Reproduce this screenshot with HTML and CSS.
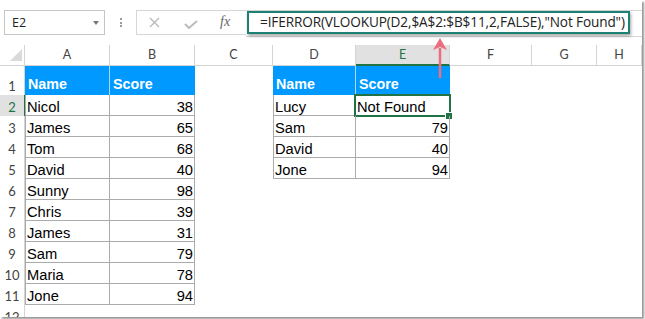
FILE: index.html
```html
<!DOCTYPE html>
<html>
<head>
<meta charset="utf-8">
<link rel="stylesheet" href="styles.css">
</head>
<body>
<div class="frame">
  <div class="fbar">
    <div class="namebox"><span>E2</span><span class="caret"></span></div>
    <div class="grip"><i></i><i></i><i></i></div>
    <div class="btns">
      <svg class="ic-x" width="11" height="11" viewBox="0 0 11 11"><path d="M1 1 L10 10 M10 1 L1 10" stroke="#b9b9b9" stroke-width="1.4" fill="none"/></svg>
      <svg class="ic-ok" width="14" height="9" viewBox="0 0 14 9"><path d="M1 4 L5 8 L13 1" stroke="#bcbcbc" stroke-width="2" fill="none"/></svg>
      <span class="fx">fx</span>
    </div>
    <div class="formula">
      <div class="finput">=IFERROR(VLOOKUP(D2,$A$2:$B$11,2,FALSE),"Not Found")</div>
    </div>
  </div>

  <div class="sheet">
    <div class="corner"><svg width="24" height="20" viewBox="0 0 24 20"><polygon points="10,16 22,16 22,4" fill="#dadada"/></svg></div>
    <div class="colh">A</div><div class="colh">B</div><div class="colh">C</div><div class="colh">D</div><div class="colh sel">E</div><div class="colh">F</div><div class="colh">G</div><div class="colh">H</div>

    <div class="rowh">1</div><div class="th sep">Name</div><div class="th">Score</div><div></div><div class="th sep">Name</div><div class="th">Score</div><div></div><div></div><div></div>

    <div class="rowh sel">2</div><div class="td first">Nicol</div><div class="td num">38</div><div></div><div class="td first">Lucy</div><div class="td active">Not Found<span class="selbox"></span><span class="handle"></span></div><div></div><div></div><div></div>

    <div class="rowh">3</div><div class="td first">James</div><div class="td num">65</div><div></div><div class="td first">Sam</div><div class="td num">79</div><div></div><div></div><div></div>

    <div class="rowh">4</div><div class="td first">Tom</div><div class="td num">68</div><div></div><div class="td first">David</div><div class="td num">40</div><div></div><div></div><div></div>

    <div class="rowh">5</div><div class="td first">David</div><div class="td num">40</div><div></div><div class="td first">Jone</div><div class="td num">94</div><div></div><div></div><div></div>

    <div class="rowh">6</div><div class="td first">Sunny</div><div class="td num">98</div><div></div><div></div><div></div><div></div><div></div><div></div>

    <div class="rowh">7</div><div class="td first">Chris</div><div class="td num">39</div><div></div><div></div><div></div><div></div><div></div><div></div>

    <div class="rowh">8</div><div class="td first">James</div><div class="td num">31</div><div></div><div></div><div></div><div></div><div></div><div></div>

    <div class="rowh">9</div><div class="td first">Sam</div><div class="td num">79</div><div></div><div></div><div></div><div></div><div></div><div></div>

    <div class="rowh">10</div><div class="td first">Maria</div><div class="td num">78</div><div></div><div></div><div></div><div></div><div></div><div></div>

    <div class="rowh">11</div><div class="td first">Jone</div><div class="td num">94</div><div></div><div></div><div></div><div></div><div></div><div></div>

    <div class="rowh">12</div><div></div><div></div><div></div><div></div><div></div><div></div><div></div><div></div>
  </div>

  <svg class="arrow" width="20" height="46" viewBox="0 0 20 46">
    <path d="M10 12 L10 42" stroke="#ea6f80" stroke-width="2.6" fill="none"/>
    <path d="M10 2 L17 14 L10 11 L3 14 Z" fill="#ea6f80"/>
  </svg>
</div>
</body>
</html>
```

FILE: styles.css
```css
* { box-sizing: border-box; margin: 0; padding: 0; }

body {
  width: 645px;
  height: 319px;
  background: #fff;
  overflow: hidden;
}

.frame {
  position: relative;
  width: 642px;
  height: 317px;
  overflow: hidden;
  background: #fff;
  box-shadow: 2px 2px 2px rgba(0, 0, 0, 0.42);
}

/* ---------- formula bar ---------- */
.fbar {
  display: flex;
  align-items: flex-start;
  height: 45px;
  padding-top: 10px;
}

.namebox {
  margin-left: 4px;
  width: 101px;
  height: 25px;
  border: 1px solid #c6c6c6;
  display: flex;
  align-items: center;
  justify-content: space-between;
  padding: 0 5px 1px 7px;
  font: 12.5px "Open Sans", sans-serif;
  color: #222;
}

.caret {
  width: 0;
  height: 0;
  border-left: 3.5px solid transparent;
  border-right: 3.5px solid transparent;
  border-top: 4px solid #777;
  margin-top: 1px;
}

.grip {
  margin: 8px 0 0 15px;
  display: flex;
  flex-direction: column;
  gap: 1.5px;
}
.grip i {
  display: block;
  width: 2px;
  height: 2px;
  background: #9c9c9c;
}

.btns {
  margin-left: 14px;
  width: 110px;
  height: 25px;
  border: 1px solid #d6d6d6;
  border-right: none;
  display: flex;
  align-items: center;
  padding-left: 12px;
}
.ic-ok { margin-left: 24px; margin-top: 3px; }
.fx {
  margin-left: 22px;
  font: italic 14px "Liberation Serif", serif;
  color: #666;
  margin-top: -1px;
}

.formula {
  flex: 1;
  height: 27px;
  border-top: 1px solid #d6d6d6;
  border-bottom: 1px solid #d6d6d6;
  padding-left: 1px;
}

.finput {
  width: 383px;
  height: 23px;
  border: 2px solid #1d8075;
  box-shadow: 1px 2px 3px rgba(0, 0, 0, 0.35);
  padding-left: 11px;
  font: 13.6px "Open Sans", sans-serif;
  letter-spacing: -0.12px;
  line-height: 18px;
  color: #222;
  white-space: nowrap;
  background: #fff;
}

/* ---------- sheet ---------- */
.sheet {
  display: grid;
  grid-template-columns: 25px 85px 85px 78px 83px 94px 82px 65px 45px;
  grid-template-rows: 21px 29px repeat(11, 21px);
  font-family: "Liberation Sans", Arial, sans-serif;
  font-size: 14.7px;
}

.corner {
  border-right: 1px solid #d4d4d4;
  border-bottom: 1px solid #d4d4d4;
}
.corner svg { display: block; }

.colh {
  border-right: 1px solid #d4d4d4;
  border-bottom: 1px solid #d4d4d4;
  text-align: center;
  font: 12.5px Lato, sans-serif;
  line-height: 20px;
  color: #444;
}
.colh.sel {
  background: #e1e1e1;
  color: #217346;
  border-bottom: 2px solid #217346;
}

.rowh {
  border-right: 1px solid #d4d4d4;
  display: flex;
  align-items: flex-end;
  justify-content: center;
  font: 13px Lato, sans-serif;
  line-height: 17px;
  color: #444;
}
.rowh.sel {
  background: #e1e1e1;
  color: #217346;
  border-right: 1px solid #217346;
}

.th {
  background: #0099ff;
  color: #fff;
  font-weight: bold;
  font-size: 14.3px;
  display: flex;
  align-items: flex-end;
  padding: 0 0 2px 3px;
  line-height: 17px;
}
.th.sep { border-right: 1px solid rgba(255, 255, 255, 0.65); }

.td {
  position: relative;
  border-right: 1px solid #ababab;
  border-bottom: 1px solid #ababab;
  display: flex;
  align-items: flex-end;
  padding: 0 1px;
  line-height: 16px;
  color: #000;
  white-space: nowrap;
}
.td.first { border-left: 1px solid #ababab; }
.td.num { justify-content: flex-end; }

.selbox {
  position: absolute;
  left: -2px;
  top: -1px;
  right: -2px;
  bottom: -2px;
  border: 2px solid #217346;
}
.handle {
  position: absolute;
  right: -3px;
  bottom: -4px;
  width: 6px;
  height: 6px;
  background: #217346;
  outline: 1px solid #fff;
}

.arrow {
  position: absolute;
  left: 430px;
  top: 36px;
}
```
